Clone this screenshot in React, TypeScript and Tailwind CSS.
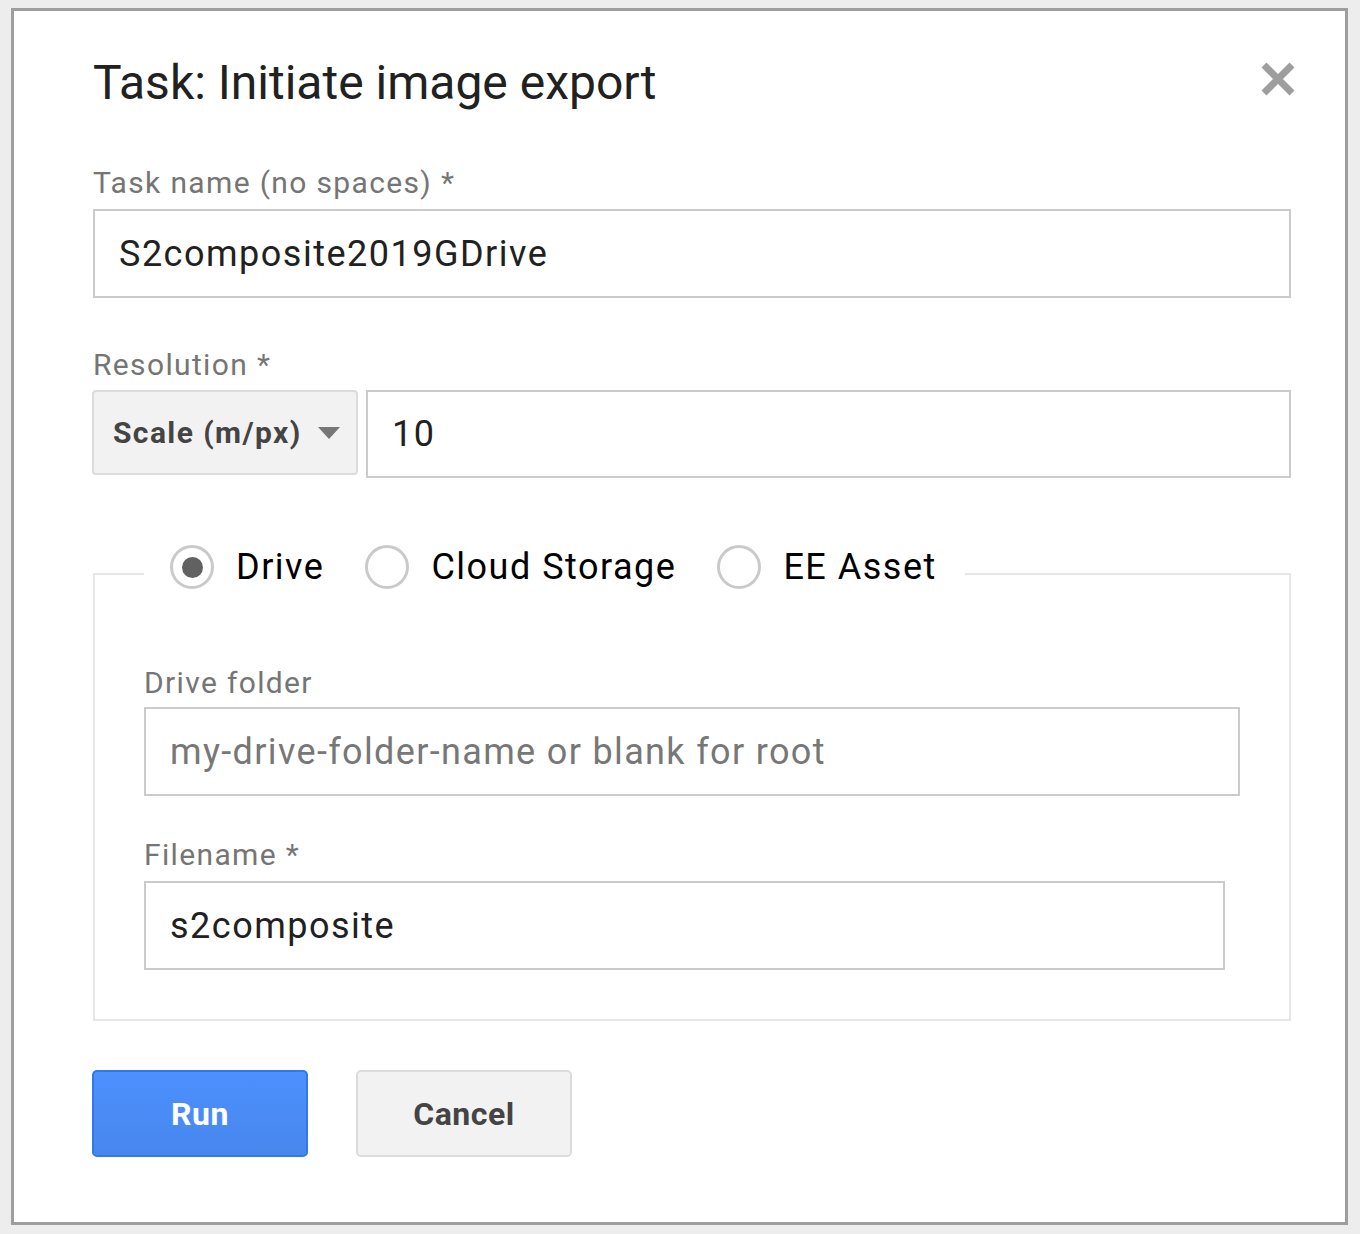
import React, { useState } from 'react';

type Destination = 'drive' | 'gcs' | 'asset';

const destinations: { key: Destination; label: string }[] = [
  { key: 'drive', label: 'Drive' },
  { key: 'gcs', label: 'Cloud Storage' },
  { key: 'asset', label: 'EE Asset' },
];

function RadioOption({
  checked,
  label,
  onSelect,
}: {
  checked: boolean;
  label: string;
  onSelect: () => void;
}) {
  return (
    <label className="flex cursor-pointer items-center gap-[22px]" onClick={onSelect}>
      <span className="flex h-[44px] w-[44px] items-center justify-center rounded-full border-[3px] border-[#cacaca] bg-white">
        {checked && <span className="h-[21px] w-[21px] rounded-full bg-[#616161]" />}
      </span>
      <span className="text-[36px] leading-[44px] tracking-[1.5px] text-black">{label}</span>
    </label>
  );
}

export default function App() {
  const [taskName, setTaskName] = useState('S2composite2019GDrive');
  const [scale, setScale] = useState('10');
  const [dest, setDest] = useState<Destination>('drive');
  const [folder, setFolder] = useState('');
  const [filename, setFilename] = useState('s2composite');

  const labelCls = 'block text-[30px] leading-[36px] tracking-[1.35px] text-[#757575]';
  const inputCls =
    'block border-2 border-[#cbcbcb] bg-white px-[24px] text-[36px] tracking-[1.5px] text-[#212121] outline-none placeholder:text-[#777] placeholder:tracking-[1.35px]';

  return (
    <div className="min-h-[1234px] w-[1360px] bg-[#ededed] pt-[8px] pl-[11px] font-[Roboto,sans-serif]">
      <div className="h-[1217px] w-[1337px] border-[3px] border-[#9e9e9e] bg-white pt-[44px] pr-[54px] pl-[79px]">
        {/* Header */}
        <div className="flex items-start justify-between">
          <h1 className="text-[48px] leading-[56px] font-normal text-[#212121]">Task: Initiate image export</h1>
          <button className="mt-[7px] -mr-[4px]" aria-label="Close">
            <svg width="34" height="34" viewBox="0 0 34 34" className="blur-[0.5px]">
              <path d="M3 3 L31 31 M31 3 L3 31" stroke="#9e9e9e" strokeWidth="7" fill="none" />
            </svg>
          </button>
        </div>

        {/* Task name */}
        <label className={`${labelCls} mt-[54px]`}>Task name (no spaces) *</label>
        <input
          className={`${inputCls} mt-[8px] h-[89px] w-full`}
          value={taskName}
          onChange={(e) => setTaskName(e.target.value)}
        />

        {/* Resolution */}
        <label className={`${labelCls} mt-[49px]`}>Resolution *</label>
        <div className="mt-[7px] flex items-start">
          <button className="-ml-[1px] flex h-[85px] w-[266px] items-center gap-[16px] rounded-[4px] border-2 border-[#dcdcdc] bg-[#f2f2f2] pl-[19px] text-[30px] font-bold tracking-[1.4px] text-[#444]">
            Scale (m/px)
            <svg width="22" height="12" viewBox="0 0 22 12">
              <path d="M0 0 L22 0 L11 12 Z" fill="#777" />
            </svg>
          </button>
          <input
            className={`${inputCls} ml-[8px] h-[88px] flex-1`}
            value={scale}
            onChange={(e) => setScale(e.target.value)}
          />
        </div>

        {/* Destination */}
        <fieldset className="mt-[67px] border-2 border-[#e6e6e6] px-[49px] pt-[62px] pb-[49px]">
          <legend className="pr-[28px] pb-[14px] pl-[26px]">
            <div className="flex items-center gap-[41px]">
              {destinations.map((d) => (
                <RadioOption
                  key={d.key}
                  label={d.label}
                  checked={dest === d.key}
                  onSelect={() => setDest(d.key)}
                />
              ))}
            </div>
          </legend>

          <label className={labelCls}>Drive folder</label>
          <input
            className={`${inputCls} mt-[6px] h-[89px] w-[1096px]`}
            placeholder="my-drive-folder-name or blank for root"
            value={folder}
            onChange={(e) => setFolder(e.target.value)}
          />

          <label className={`${labelCls} mt-[41px]`}>Filename *</label>
          <input
            className={`${inputCls} mt-[8px] h-[89px] w-[1081px]`}
            value={filename}
            onChange={(e) => setFilename(e.target.value)}
          />
        </fieldset>

        {/* Actions */}
        <div className="mt-[49px] -ml-[1px] flex gap-[48px]">
          <button className="h-[87px] w-[216px] rounded-[5px] border-2 border-[#3079ed] bg-linear-to-b from-[#4d90fe] to-[#4787ed] text-[32px] font-bold tracking-[0.5px] text-white">
            Run
          </button>
          <button className="h-[87px] w-[216px] rounded-[5px] border-2 border-[#dcdcdc] bg-[#f2f2f2] text-[32px] font-bold tracking-[0.5px] text-[#444]">
            Cancel
          </button>
        </div>
      </div>
    </div>
  );
}
